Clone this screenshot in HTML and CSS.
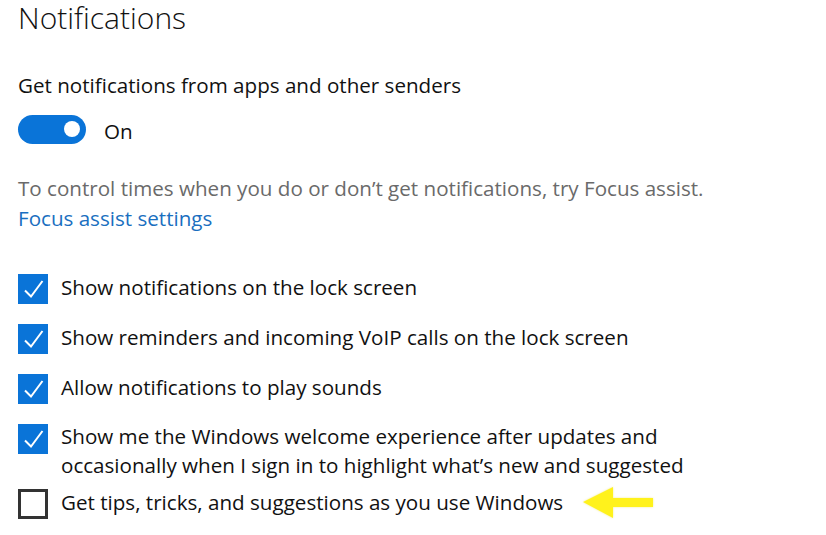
FILE: index.html
```html
<!DOCTYPE html>
<html lang="en">
<head>
<meta charset="utf-8">
<title>Notifications</title>
<link rel="stylesheet" href="styles.css">
</head>
<body>
<main class="page">
  <h1 class="title">Notifications</h1>
  <p class="label">Get notifications from apps and other senders</p>
  <div class="toggle-row">
    <span class="toggle"><span class="knob"></span></span>
    <span class="toggle-text">On</span>
  </div>
  <p class="hint">To control times when you do or don’t get notifications, try Focus assist.</p>
  <a class="link" href="#">Focus assist settings</a>
  <ul class="checks">
    <li class="check">
      <span class="box on"><svg viewBox="0 0 30 30" width="30" height="30"><path d="M7 16.5 L13 22.5 L24.5 7" fill="none" stroke="#fff" stroke-width="2"/></svg></span>
      <span class="check-text">Show notifications on the lock screen</span>
    </li>
    <li class="check">
      <span class="box on"><svg viewBox="0 0 30 30" width="30" height="30"><path d="M7 16.5 L13 22.5 L24.5 7" fill="none" stroke="#fff" stroke-width="2"/></svg></span>
      <span class="check-text">Show reminders and incoming VoIP calls on the lock screen</span>
    </li>
    <li class="check">
      <span class="box on"><svg viewBox="0 0 30 30" width="30" height="30"><path d="M7 16.5 L13 22.5 L24.5 7" fill="none" stroke="#fff" stroke-width="2"/></svg></span>
      <span class="check-text">Allow notifications to play sounds</span>
    </li>
    <li class="check tight">
      <span class="box on"><svg viewBox="0 0 30 30" width="30" height="30"><path d="M7 16.5 L13 22.5 L24.5 7" fill="none" stroke="#fff" stroke-width="2"/></svg></span>
      <span class="check-text multi">Show me the Windows welcome experience after updates and<br>occasionally when I sign in to highlight what’s new and suggested</span>
    </li>
    <li class="check">
      <span class="box off"></span>
      <span class="check-text">Get tips, tricks, and suggestions as you use Windows</span>
    </li>
  </ul>
  <svg class="arrow" viewBox="0 0 76 36" width="76" height="36">
    <defs><filter id="g" x="-20%" y="-20%" width="140%" height="140%"><feGaussianBlur stdDeviation="1.2"/></filter></defs>
    <polygon points="3,17 33,2 33,13 73,13 73,22 33,22 33,33" fill="#f4ee9a" filter="url(#g)"/>
    <polygon points="3,17 33,2 33,13 73,13 73,22 33,22 33,33" fill="#fff21c"/>
  </svg>
</main>
</body>
</html>
```
FILE: styles.css
```css
html, body {
  margin: 0;
  padding: 0;
  background: #ffffff;
}
body {
  font-family: "Open Sans", "Noto Sans", sans-serif;
  color: #111111;
  width: 826px;
  height: 535px;
  overflow: hidden;
}
.page {
  position: relative;
  padding-left: 18px;
  padding-top: 1px;
  height: 534px;
}
.title {
  margin: 0;
  font-size: 30px;
  font-weight: 300;
  line-height: 34px;
  color: #111111;
}
.label {
  margin: 35px 0 0;
  font-size: 20.6px;
  line-height: 30px;
}
.toggle-row {
  margin-top: 14px;
  display: flex;
  align-items: center;
  height: 30px;
}
.toggle {
  width: 68px;
  height: 29px;
  border-radius: 15px;
  background: #0a74d8;
  display: flex;
  align-items: center;
  justify-content: flex-end;
  padding-right: 6px;
  box-sizing: border-box;
}
.knob {
  width: 16px;
  height: 16px;
  border-radius: 50%;
  background: #ffffff;
}
.toggle-text {
  margin-left: 18px;
  margin-top: 3px;
  font-size: 20.6px;
  line-height: 30px;
}
.hint {
  margin: 29px 0 0;
  font-size: 20.6px;
  line-height: 30px;
  color: #6a6a6a;
}
.link {
  display: block;
  font-size: 20.6px;
  line-height: 30px;
  color: #1a6fc0;
  text-decoration: none;
}
.checks {
  list-style: none;
  margin: 39px 0 0;
  padding: 0;
}
.check {
  display: flex;
  align-items: flex-start;
  margin-bottom: 18px;
}
.check.tight {
  margin-bottom: 7px;
}
.box {
  flex: none;
  width: 30px;
  height: 30px;
  margin-top: 2px;
  box-sizing: border-box;
}
.box svg {
  display: block;
}
.box.on {
  background: #0a74d8;
}
.box.off {
  border: 3px solid #333333;
  background: #ffffff;
}
.check-text {
  margin-left: 13px;
  font-size: 20.6px;
  line-height: 30px;
}
.check-text.multi {
  line-height: 29px;
}
.arrow {
  position: absolute;
  left: 580px;
  top: 485px;
}
```
